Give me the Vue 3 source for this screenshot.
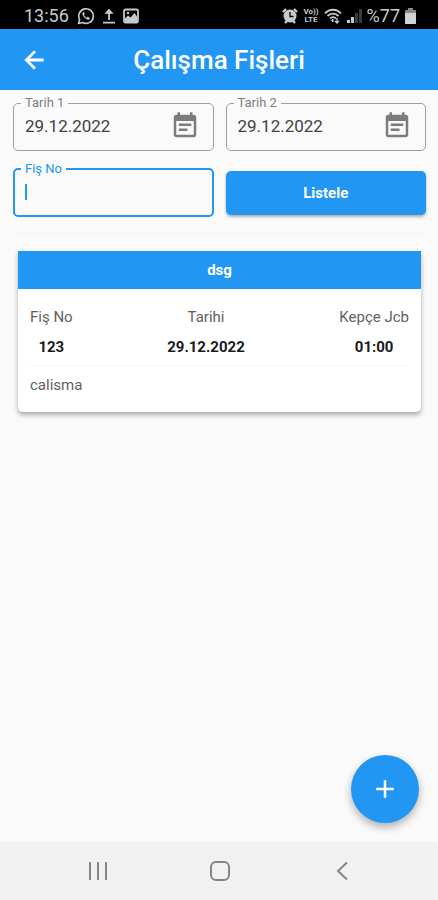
<script setup>
import { ref } from 'vue'

const dates = ref([
  { id: 'tarih1', label: 'Tarih 1', value: '29.12.2022' },
  { id: 'tarih2', label: 'Tarih 2', value: '29.12.2022' },
])
const slipNo = ref('')
const slips = ref([
  { no: '123', date: '29.12.2022', hours: '01:00', customer: 'dsg', note: 'calisma' },
])
</script>

<template>
  <div class="screen">
    <div class="status">
      <div class="status-group">
        <span class="clock">13:56</span>
        <svg width="18" height="18" viewBox="0 0 18 18" fill="none" stroke="#c9c9c9">
          <path d="M1.5 16.5l1.1-4A7.3 7.3 0 1 1 5.600 15.500z" stroke-width="1.600" stroke-linejoin="round" />
          <path d="M6.300 5.300c-1.500 1.300-.2 3.800 1.400 5.300 1.700 1.600 3.700 2.500 4.800 1.100l-.1-.9-1.800-.9-1 1c-1.300-.5-2.400-1.600-2.900-2.800l.8-1-.6-1.800z" fill="#c9c9c9" stroke-width=".5" />
        </svg>
        <svg width="12" height="16" viewBox="0 0 12 16" fill="none" stroke="#c9c9c9" stroke-width="1.800">
          <path d="M6 12V3M0 14.700h12" />
          <path d="M2 5.500L6 1l4 4.500z" fill="#c9c9c9" stroke-width=".6" />
        </svg>
        <svg width="16" height="16" viewBox="0 0 16 16">
          <rect x="1" y="1.500" width="14" height="13" rx="1.500" fill="none" stroke="#c9c9c9" stroke-width="1.800" />
          <path d="M2 12V10.500l3-3 2.500 2 4-4.500L14 8.500V14H2z" fill="#c9c9c9" />
          <circle cx="5" cy="5" r="1.200" fill="#c9c9c9" />
        </svg>
      </div>
      <div class="status-group tight">
        <svg width="16" height="16" viewBox="0 0 16 16">
          <path d="M1 4l3-3M15 4l-3-3M3 15l2-2M13 15l-2-2" stroke="#c9c9c9" stroke-width="2.400" />
          <circle cx="8" cy="8" r="6.500" fill="#c9c9c9" />
          <path d="M8 4v4.500h3.500" fill="none" stroke="#000" stroke-width="1.300" />
        </svg>
        <span class="volte"><span>Vo))</span><span>LTE</span></span>
        <svg width="18" height="16" viewBox="0 0 18 16" fill="none" stroke="#c9c9c9" stroke-width="1.800">
          <path d="M1 5.500c4.500-5 11.500-5 16 0M3.500 8c3.200-3.300 7.800-3.300 11 0M6 10.500c2-1.800 4-1.800 6 0" />
          <path d="M9 11l-1.500 1.500L9 14z" fill="#c9c9c9" stroke-width="1" />
          <path d="M13 10v5M11 13l2 2 2-2" stroke-width="1.300" />
        </svg>
        <svg width="15" height="14" viewBox="0 0 15 14">
          <path d="M0 11h3v3H0zM4 8h3v6H4z" fill="#c9c9c9" />
          <path d="M8 4h3v10H8zM12 0h3v14h-3z" fill="#3c3c3c" />
        </svg>
        <span class="battery-text">%77</span>
        <svg width="11" height="16" viewBox="0 0 11 16">
          <path d="M3 0h5v2h2q1 0 1 1v12q0 1-1 1H1q-1 0-1-1V3q0-1 1-1h2z" fill="#8a8a8a" />
          <path d="M0 5h11v10q0 1-1 1H1q-1 0-1-1z" fill="#d2d2d2" />
        </svg>
      </div>
    </div>

    <header class="appbar">
      <button class="back" type="button" aria-label="Geri">
        <svg width="28" height="28" viewBox="0 0 24 24" fill="#fff" stroke="#fff" stroke-width=".5">
          <path d="M20 11H7.830l5.590-5.590L12 4l-8 8 8 8 1.410-1.410L7.830 13H20v-2z" />
        </svg>
      </button>
      <h1>Çalışma Fişleri</h1>
    </header>

    <main class="content">
      <form class="filters" @submit.prevent>
        <fieldset v-for="d in dates" :key="d.id" class="field">
          <legend><label :for="d.id">{{ d.label }}</label></legend>
          <div class="field-row">
            <input :id="d.id" v-model="d.value" type="text" />
            <button class="picker" type="button" :aria-label="d.label">
              <svg width="30" height="30" viewBox="0 0 24 24" fill="#7c7c7c">
                <path d="M17 10H7v2h10v-2zm2-7h-1V1h-2v2H8V1H6v2H5c-1.110 0-1.990.9-1.990 2L3 19c0 1.100.89 2 2 2h14c1.100 0 2-.9 2-2V5c0-1.100-.9-2-2-2zm0 16H5V8h14v11zm-5-5H7v2h7v-2z" />
              </svg>
            </button>
          </div>
        </fieldset>
        <fieldset class="field active">
          <legend><label for="fisno">Fiş No</label></legend>
          <div class="field-row">
            <span class="caret"></span>
            <input id="fisno" v-model="slipNo" type="text" />
          </div>
        </fieldset>
        <button class="submit" type="submit">Listele</button>
      </form>

      <hr />

      <article v-for="s in slips" :key="s.no" class="card">
        <h2>{{ s.customer }}</h2>
        <table>
          <thead>
            <tr>
              <th>Fiş No</th>
              <th>Tarihi</th>
              <th>Kepçe Jcb</th>
            </tr>
          </thead>
          <tbody>
            <tr>
              <td>{{ s.no }}</td>
              <td>{{ s.date }}</td>
              <td>{{ s.hours }}</td>
            </tr>
            <tr>
              <td class="note" colspan="3">{{ s.note }}</td>
            </tr>
          </tbody>
        </table>
      </article>

      <button class="fab" type="button" aria-label="Ekle">
        <svg width="30" height="30" viewBox="0 0 24 24" fill="#fff">
          <path d="M19 13h-6v6h-2v-6H5v-2h6V5h2v6h6v2z" />
        </svg>
      </button>
    </main>

    <nav class="navbar">
      <button type="button" aria-label="Son uygulamalar">
        <svg width="20" height="20" viewBox="0 0 20 20" stroke="#858585" stroke-width="2">
          <path d="M2 1v18M10 1v18M18 1v18" />
        </svg>
      </button>
      <button type="button" aria-label="Ana ekran">
        <svg width="22" height="22" viewBox="0 0 22 22" fill="none" stroke="#858585" stroke-width="2">
          <rect x="2" y="2" width="18" height="18" rx="5" />
        </svg>
      </button>
      <button type="button" aria-label="Geri dön">
        <svg width="20" height="20" viewBox="0 0 20 20" fill="none" stroke="#858585" stroke-width="2">
          <path d="M15 1.500L6 10l9 8.500" />
        </svg>
      </button>
    </nav>
  </div>
</template>

<style>
body {
  margin: 0;
  background: #fafafa;
}
</style>

<style scoped>
.screen {
  display: flex;
  flex-direction: column;
  min-height: 100vh;
  font-family: Roboto, "Liberation Sans", sans-serif;
  background: #fafafa;
}
button {
  border: 0;
  padding: 0;
  background: none;
  font-family: inherit;
  cursor: pointer;
}
svg {
  display: block;
  flex: none;
}
.status {
  display: flex;
  justify-content: space-between;
  box-sizing: border-box;
  height: 29px;
  padding: 3px 22px 0 24px;
  background: #000;
  color: #c9c9c9;
}
.status-group {
  display: flex;
  align-items: center;
  gap: 8px;
}
.status-group.tight {
  gap: 5px;
}
.clock,
.battery-text {
  font-size: 18px;
  line-height: 26px;
}
.volte {
  display: flex;
  flex-direction: column;
  align-items: center;
  font-size: 8px;
  line-height: 8px;
  font-weight: 700;
}
.appbar {
  display: grid;
  grid-template-columns: 1fr auto 1fr;
  align-items: center;
  height: 61px;
  padding: 0 20px;
  background: #2196f3;
}
.back {
  justify-self: start;
}
h1 {
  margin: 0;
  color: #fff;
  font-size: 26px;
  line-height: 32px;
  font-weight: 500;
}
.content {
  position: relative;
  flex: 1;
  padding: 7px 12px 16px 13px;
}
.filters {
  display: grid;
  grid-template-columns: 1fr 1fr;
  gap: 12px;
}
.field {
  box-sizing: border-box;
  min-width: 0;
  height: 54px;
  margin: 0;
  padding: 0 13px 0 7px;
  border: 1px solid #a0a0a0;
  border-radius: 5px;
}
.field.active {
  padding-left: 6px;
  border: 2px solid #2196f3;
}
legend {
  height: 12px;
  padding: 0 4px;
  font-size: 13px;
  line-height: 12px;
  color: #808080;
}
.active legend {
  color: #2196f3;
}
.field-row {
  display: flex;
  align-items: center;
  height: 34px;
  padding-left: 4px;
}
.field-row input {
  flex: 1;
  min-width: 0;
  width: 100%;
  padding: 0;
  border: 0;
  outline: 0;
  background: transparent;
  color: #424242;
  font-family: inherit;
  font-size: 17px;
  line-height: 24px;
}
.caret {
  width: 2px;
  height: 16px;
  background: #2196f3;
}
.submit {
  height: 44px;
  margin: 8px 0 2px;
  border-radius: 5px;
  background: #2196f3;
  color: #fff;
  font-size: 15px;
  font-weight: 700;
  box-shadow: 0 2px 3px rgba(0, 0, 0, 0.3);
}
hr {
  margin: 16px 0 17px;
  border: 0;
  border-top: 1px solid #f3f3f3;
}
.card {
  margin: 0 5px;
  border-radius: 0 0 5px 5px;
  background: #fff;
  box-shadow: 0 3px 5px rgba(0, 0, 0, 0.32);
}
h2 {
  margin: 0;
  background: #2196f3;
  color: #fff;
  font-size: 15px;
  line-height: 38px;
  font-weight: 700;
  text-align: center;
}
table {
  display: grid;
  grid-template-columns: auto auto auto;
  justify-content: space-between;
  padding: 13px 12px 12px;
}
thead,
tbody,
tr {
  display: contents;
}
th,
td {
  padding: 0;
  text-align: center;
  font-size: 15px;
  line-height: 30px;
}
th {
  color: #616161;
  font-weight: 400;
}
td {
  padding-bottom: 3px;
  color: #1a1a1a;
  font-weight: 700;
}
td.note {
  grid-column: 1 / -1;
  padding: 4px 0 0;
  border-top: 1px solid #f5f5f5;
  color: #616161;
  font-weight: 400;
  text-align: left;
}
.fab {
  position: absolute;
  right: 19px;
  bottom: 19px;
  display: grid;
  place-items: center;
  width: 68px;
  height: 68px;
  border-radius: 50%;
  background: #2196f3;
  box-shadow: 0 4px 8px rgba(0, 0, 0, 0.3);
}
.navbar {
  display: flex;
  justify-content: space-around;
  align-items: center;
  height: 58px;
  padding: 0 35px 0 37px;
  background: #f1f1f1;
}
</style>
